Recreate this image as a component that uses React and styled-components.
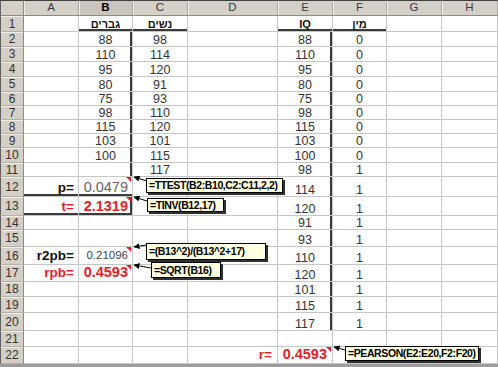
import React from 'react';
import styled, { createGlobalStyle, css } from 'styled-components';

const GlobalStyle = createGlobalStyle`
  html, body {
    margin: 0;
    padding: 0;
    background: #9c9c9c;
  }
  body {
    font-family: "Liberation Sans", Arial, sans-serif;
  }
`;

const RED = '#e3212d';
const GRID = '#c6c6c6';
const LINE = '#3a3a3a';

const COLS = [
  { id: 'A', w: 55 },
  { id: 'B', w: 54 },
  { id: 'C', w: 55 },
  { id: 'D', w: 90 },
  { id: 'E', w: 55 },
  { id: 'F', w: 54 },
  { id: 'G', w: 55 },
  { id: 'H', w: 56 },
];

// rows 1..22, uneven because rows 12/13/16/17 were enlarged in the sheet
const ROW_HEIGHTS = [16, 15, 15, 15, 15, 14, 14, 14, 14, 15, 14, 20, 19, 14, 17, 18, 17, 15, 16, 18, 16, 17];

const MALES = [88, 110, 95, 80, 75, 98, 115, 103, 100];
const FEMALES = [98, 114, 120, 91, 93, 110, 120, 101, 115, 117];

const cells = {};
const set = (ref, props) => {
  cells[ref] = { ...(cells[ref] || {}), ...props };
};

set('B1', { text: 'גברים', kind: 'head', bottom: true });
set('C1', { text: 'נשים', kind: 'head', bottom: true });
set('E1', { text: 'IQ', kind: 'head', bottom: true });
set('F1', { text: 'מין', kind: 'head', bottom: true });

MALES.forEach((v, i) => set(`B${i + 2}`, { text: v, kind: 'num' }));
FEMALES.forEach((v, i) => set(`C${i + 2}`, { text: v, kind: 'num' }));
[...MALES, ...FEMALES].forEach((v, i) => {
  set(`E${i + 2}`, { text: v, kind: 'num', right: true });
  set(`F${i + 2}`, { text: i < 9 ? 0 : 1, kind: 'num' });
});
for (let r = 2; r <= 11; r++) set(`B${r}`, { right: true });

set('A12', { text: 'p=', kind: 'label', bottom: true });
set('B12', { text: '0.0479', kind: 'value', bottom: true, note: true });
set('A13', { text: 't=', kind: 'labelRed', bottom: true });
set('B13', { text: '2.1319', kind: 'valueRed', bottom: true, right: true, note: true });
set('A16', { text: 'r2pb=', kind: 'label' });
set('B16', { text: '0.21096', kind: 'small', note: true });
set('A17', { text: 'rpb=', kind: 'labelRed' });
set('B17', { text: '0.4593', kind: 'valueRed', note: true });
set('D22', { text: 'r=', kind: 'labelRed', pad: 5 });
set('E22', { text: '0.4593', kind: 'valueRed', note: true, pad: 5 });

const NOTES = [
  { x: 146, y: 178, w: 137, h: 15, text: '=TTEST(B2:B10,C2:C11,2,2)' },
  { x: 147, y: 198, w: 77, h: 14, text: '=TINV(B12,17)' },
  { x: 146, y: 243, w: 120, h: 17, text: '=(B13^2)/(B13^2+17)' },
  { x: 151, y: 262, w: 70, h: 16, text: '=SQRT(B16)' },
  { x: 345, y: 346, w: 134, h: 15, text: '=PEARSON(E2:E20,F2:F20)' },
];

const ARROWS = [
  { from: [147, 181], to: [134, 177] },
  { from: [147, 201], to: [134, 197] },
  { from: [146, 245], to: [134, 247] },
  { from: [151, 268], to: [134, 265] },
  { from: [345, 350], to: [334, 347] },
];

const KINDS = {
  head: css`
    font-size: 11px;
    font-weight: bold;
    color: #111;
    padding-bottom: 1px;
  `,
  num: css`
    font-size: 12.5px;
    color: #333;
  `,
  label: css`
    font-size: 13.5px;
    font-weight: bold;
    color: #111;
    padding-bottom: 2px;
  `,
  labelRed: css`
    font-size: 13.5px;
    font-weight: bold;
    color: ${RED};
    padding-bottom: 2px;
  `,
  value: css`
    font-size: 14.5px;
    color: #666;
    padding-bottom: 2px;
  `,
  valueRed: css`
    font-size: 14.5px;
    font-weight: bold;
    color: ${RED};
    padding-bottom: 2px;
  `,
  small: css`
    font-size: 11.5px;
    color: #444;
    padding-bottom: 3px;
  `,
};

const RIGHT_KINDS = ['label', 'labelRed', 'value', 'valueRed', 'small'];

const Sheet = styled.div`
  position: relative;
  width: 498px;
  height: 367px;
  overflow: hidden;
  background: #9c9c9c;
`;

const Grid = styled.div`
  display: grid;
  grid-template-columns: 24px ${COLS.map((c) => `${c.w}px`).join(' ')};
  grid-template-rows: 16px ${ROW_HEIGHTS.map((h) => `${h}px`).join(' ')};
  background: #fff;
`;

const Corner = styled.div`
  box-sizing: border-box;
  background: #d4d0c8;
  border-top: 1px solid #404040;
  border-left: 1px solid #606060;
  border-right: 1px solid #8c8a84;
  border-bottom: 1px solid #8c8a84;
`;

const ColHead = styled.div`
  box-sizing: border-box;
  display: flex;
  align-items: center;
  justify-content: center;
  background: ${(p) => (p.$active ? '#c9c5bc' : '#d4d0c8')};
  border-top: 1px solid #404040;
  border-right: 1px solid #a9a69e;
  border-bottom: 1px solid #8c8a84;
  box-shadow: inset 1px 0 0 #f2f0ea;
  font-size: 11.5px;
  font-weight: ${(p) => (p.$active ? 'bold' : 'normal')};
  color: ${(p) => (p.$active ? '#000' : '#3a3a3a')};
  line-height: 1;
`;

const RowHead = styled.div`
  box-sizing: border-box;
  display: flex;
  align-items: center;
  justify-content: center;
  background: #d4d0c8;
  border-left: 1px solid #606060;
  border-right: 1px solid #8c8a84;
  border-bottom: 1px solid #b3b0a8;
  box-shadow: inset 0 1px 0 #efede7;
  font-size: 12px;
  color: #333;
  line-height: 1;
`;

const Cell = styled.div`
  position: relative;
  box-sizing: border-box;
  display: flex;
  align-items: flex-end;
  justify-content: ${(p) => (p.$alignRight ? 'flex-end' : 'center')};
  padding: 0 ${(p) => p.$pad}px 0 2px;
  border-right: 1px solid ${GRID};
  border-bottom: 1px solid ${GRID};
  white-space: nowrap;
  ${(p) => {
    const s = [];
    if (p.$thickBottom) s.push(`inset 0 -2px 0 ${LINE}`);
    if (p.$thickRight) s.push(`inset -2px 0 0 ${LINE}`);
    return s.length ? css`box-shadow: ${s.join(', ')};` : '';
  }}
  ${(p) =>
    p.$note &&
    css`
      &::after {
        content: '';
        position: absolute;
        top: 0;
        right: 1px;
        width: 0;
        height: 0;
        border-left: 5px solid transparent;
        border-top: 5px solid ${RED};
      }
    `}
`;

const Value = styled.span`
  line-height: 1;
  ${(p) => KINDS[p.$kind]}
`;

const Overlay = styled.svg`
  position: absolute;
  left: 0;
  top: 0;
  width: 498px;
  height: 367px;
  pointer-events: none;
`;

const Note = styled.div`
  position: absolute;
  left: ${(p) => p.$x}px;
  top: ${(p) => p.$y}px;
  width: ${(p) => p.$w}px;
  height: ${(p) => p.$h}px;
  box-sizing: border-box;
  display: flex;
  align-items: center;
  padding: 0 2px;
  background: #ffffe1;
  border: 1px solid #000;
  box-shadow: 2px 2px 0 #303030;
  font-size: 10.5px;
  font-weight: bold;
  letter-spacing: -0.4px;
  color: #000;
  white-space: nowrap;
  line-height: 1;
`;

export default function App() {
  const rows = ROW_HEIGHTS.map((_, i) => i + 1);

  return (
    <Sheet>
      <GlobalStyle />
      <Grid>
        <Corner />
        {COLS.map((c) => (
          <ColHead key={c.id} $active={c.id === 'B'}>
            {c.id}
          </ColHead>
        ))}
        {rows.map((r) => (
          <React.Fragment key={r}>
            <RowHead>{r}</RowHead>
            {COLS.map((c) => {
              const cell = cells[`${c.id}${r}`] || {};
              const alignRight = RIGHT_KINDS.includes(cell.kind);
              return (
                <Cell
                  key={c.id}
                  $alignRight={alignRight}
                  $pad={cell.pad ?? (alignRight ? 4 : 2)}
                  $thickBottom={cell.bottom}
                  $thickRight={cell.right}
                  $note={cell.note}
                >
                  {cell.text !== undefined && <Value $kind={cell.kind}>{cell.text}</Value>}
                </Cell>
              );
            })}
          </React.Fragment>
        ))}
      </Grid>

      <Overlay viewBox="0 0 498 367">
        <defs>
          <marker id="tip" markerWidth="6" markerHeight="6" refX="5.5" refY="3" orient="auto">
            <path d="M0,0 L6,3 L0,6 z" fill="#000" />
          </marker>
        </defs>
        {ARROWS.map((a, i) => (
          <line
            key={i}
            x1={a.from[0]}
            y1={a.from[1]}
            x2={a.to[0]}
            y2={a.to[1]}
            stroke="#000"
            strokeWidth="1"
            markerEnd="url(#tip)"
          />
        ))}
      </Overlay>

      {NOTES.map((n) => (
        <Note key={n.text} $x={n.x} $y={n.y} $w={n.w} $h={n.h}>
          {n.text}
        </Note>
      ))}
    </Sheet>
  );
}
